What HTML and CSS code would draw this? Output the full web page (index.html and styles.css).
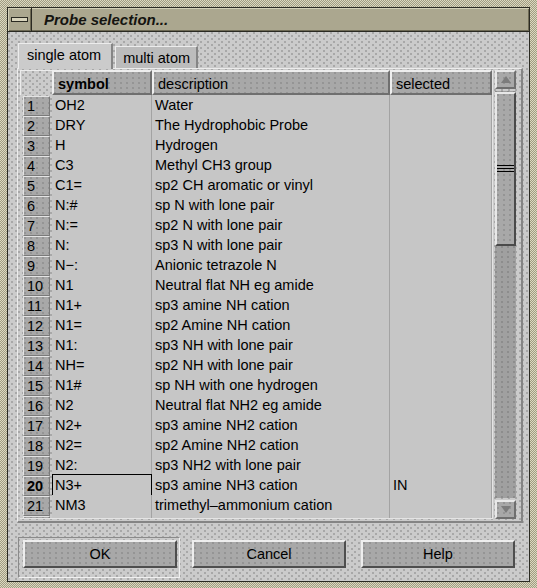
FILE: index.html
```html
<!DOCTYPE html>
<html>
<head>
<meta charset="utf-8">
<link rel="stylesheet" href="styles.css">
</head>
<body>
<div class="frame">
  <div class="win">
    <div class="titlebar">
      <div class="menubtn"><span class="dash"></span></div>
      <div class="title">Probe selection...</div>
    </div>
    <div class="body">
      <div class="tabs">
        <div class="tab active">single atom</div>
        <div class="tab">multi atom</div>
      </div>
      <div class="panel">
        <div class="tablewrap">
          <div class="grid">
            <div class="corner"></div>
            <div class="hcell bold">symbol</div>
            <div class="hcell">description</div>
            <div class="hcell">selected</div>
          </div>
          <div class="rows">
            <div class="grid row"><div class="rn">1</div><div class="c">OH2</div><div class="c">Water</div><div class="c"></div></div>
            <div class="grid row"><div class="rn">2</div><div class="c">DRY</div><div class="c">The Hydrophobic Probe</div><div class="c"></div></div>
            <div class="grid row"><div class="rn">3</div><div class="c">H</div><div class="c">Hydrogen</div><div class="c"></div></div>
            <div class="grid row"><div class="rn">4</div><div class="c">C3</div><div class="c">Methyl CH3 group</div><div class="c"></div></div>
            <div class="grid row"><div class="rn">5</div><div class="c">C1=</div><div class="c">sp2 CH aromatic or vinyl</div><div class="c"></div></div>
            <div class="grid row"><div class="rn">6</div><div class="c">N:#</div><div class="c">sp N with lone pair</div><div class="c"></div></div>
            <div class="grid row"><div class="rn">7</div><div class="c">N:=</div><div class="c">sp2 N with lone pair</div><div class="c"></div></div>
            <div class="grid row"><div class="rn">8</div><div class="c">N:</div><div class="c">sp3 N with lone pair</div><div class="c"></div></div>
            <div class="grid row"><div class="rn">9</div><div class="c">N−:</div><div class="c">Anionic tetrazole N</div><div class="c"></div></div>
            <div class="grid row"><div class="rn">10</div><div class="c">N1</div><div class="c">Neutral flat NH eg amide</div><div class="c"></div></div>
            <div class="grid row"><div class="rn">11</div><div class="c">N1+</div><div class="c">sp3 amine NH cation</div><div class="c"></div></div>
            <div class="grid row"><div class="rn">12</div><div class="c">N1=</div><div class="c">sp2 Amine NH cation</div><div class="c"></div></div>
            <div class="grid row"><div class="rn">13</div><div class="c">N1:</div><div class="c">sp3 NH with lone pair</div><div class="c"></div></div>
            <div class="grid row"><div class="rn">14</div><div class="c">NH=</div><div class="c">sp2 NH with lone pair</div><div class="c"></div></div>
            <div class="grid row"><div class="rn">15</div><div class="c">N1#</div><div class="c">sp NH with one hydrogen</div><div class="c"></div></div>
            <div class="grid row"><div class="rn">16</div><div class="c">N2</div><div class="c">Neutral flat NH2 eg amide</div><div class="c"></div></div>
            <div class="grid row"><div class="rn">17</div><div class="c">N2+</div><div class="c">sp3 amine NH2 cation</div><div class="c"></div></div>
            <div class="grid row"><div class="rn">18</div><div class="c">N2=</div><div class="c">sp2 Amine NH2 cation</div><div class="c"></div></div>
            <div class="grid row"><div class="rn">19</div><div class="c">N2:</div><div class="c">sp3 NH2 with lone pair</div><div class="c"></div></div>
            <div class="grid row"><div class="rn bold">20</div><div class="c focus">N3+</div><div class="c">sp3 amine NH3 cation</div><div class="c">IN</div></div>
            <div class="grid row"><div class="rn">21</div><div class="c">NM3</div><div class="c">trimethyl–ammonium cation</div><div class="c"></div></div>
            <div class="grid row"><div class="rn"></div><div class="c"></div><div class="c"></div><div class="c"></div></div>
          </div>
        </div>
        <div class="scrollbar">
          <div class="arrow up"><span class="tri-up"></span></div>
          <div class="trough">
            <div class="thumb"><span class="grip"></span></div>
          </div>
          <div class="arrow down"><span class="tri-down"></span></div>
        </div>
      </div>
      <div class="buttons">
        <div class="default"><div class="btn">OK</div></div>
        <div class="btn cancel">Cancel</div>
        <div class="btn help">Help</div>
      </div>
    </div>
  </div>
</div>
</body>
</html>
```
FILE: styles.css
```css
html, body {
  margin: 0;
  padding: 0;
}
body {
  width: 537px;
  height: 588px;
  overflow: hidden;
  font-family: "Liberation Sans", Arial, sans-serif;
  font-size: 14.5px;
  color: #000;
}
.frame {
  width: 537px;
  height: 588px;
  box-sizing: border-box;
  padding: 7px 7px 6px 7px;
  background-color: #c8c4aa;
  background-image:
    repeating-conic-gradient(#a09c82 0 25%, #dcd8c0 0 50%);
  background-size: 2px 2px;
}
.win {
  width: 523px;
  height: 575px;
  box-sizing: border-box;
  border: 1px solid #2a2a22;
  display: flex;
  flex-direction: column;
  background-color: #cbcbcb;
}
.titlebar {
  height: 23px;
  flex: none;
  display: flex;
  background: #aba78f;
  border-bottom: 1px solid #2a2a22;
  box-shadow: inset 1px 1px 0 #d4d0b8, inset -1px -1px 0 #6e6a55;
}
.menubtn {
  width: 23px;
  flex: none;
  border-right: 1px solid #2a2a22;
  display: flex;
  align-items: center;
  justify-content: center;
  box-shadow: inset 1px 1px 0 #d4d0b8, inset -1px -1px 0 #6e6a55;
}
.dash {
  width: 15px;
  height: 3px;
  border: 1px solid #2a2a22;
  background: #d8d4bc;
}
.title {
  font-style: italic;
  font-weight: bold;
  font-size: 15px;
  line-height: 23px;
  padding-left: 12px;
  color: #141410;
}
.body {
  flex: 1;
  display: flex;
  flex-direction: column;
  padding: 11px 6px 0 9px;
  background-color: #cbcbcb;
  background-image:
    radial-gradient(circle at 1px 1px, #a6a6a6 0.7px, transparent 0.8px),
    radial-gradient(circle at 1px 1px, #a6a6a6 0.7px, transparent 0.8px);
  background-size: 7px 6px, 7px 6px;
  background-position: 0 0, 3px 3px;
}
.tabs {
  display: flex;
  align-items: flex-end;
  height: 25px;
  padding-left: 1px;
  gap: 2px;
}
.tab {
  height: 22px;
  padding: 0 6px 0 7px;
  line-height: 22px;
  border-top: 1px solid #ececec;
  border-left: 1px solid #ececec;
  border-right: 2px solid #858585;
  background: #bcbcbc;
  box-sizing: border-box;
}
.tab.active {
  height: 26px;
  line-height: 23px;
  padding: 0 10px 0 8px;
  background: #cbcbcb;
  margin-bottom: -1px;
  position: relative;
  z-index: 1;
  border-right: 2px solid #858585;
}
.panel {
  width: 506px;
  height: 455px;
  box-sizing: border-box;
  border-top: 1px solid #ececec;
  border-left: 1px solid #ececec;
  border-right: 2px solid #858585;
  border-bottom: 2px solid #858585;
  display: flex;
  padding: 1px 5px 2px 2px;
  gap: 2px;
}
.tablewrap {
  width: 474px;
  display: flex;
  flex-direction: column;
  border-right: 1px solid #e4e4e4;
  border-bottom: 1px solid #e4e4e4;
  overflow: hidden;
}
.grid {
  display: grid;
  grid-template-columns: 32px 100px 238px 102px;
}
.corner {
  height: 25px;
  border-top: 1px solid #ececec;
  border-left: 1px solid #ececec;
  box-sizing: border-box;
}
.hcell {
  height: 25px;
  box-sizing: border-box;
  padding: 2px 0 0 4px;
  line-height: 20px;
  background-color: #a8a8a8;
  background-image: radial-gradient(circle at 1px 1px, #939393 0.7px, transparent 0.8px);
  background-size: 6px 5px;
  border-top: 2px solid #eeeeee;
  border-left: 2px solid #eeeeee;
  border-right: 2px solid #6f6f6f;
  border-bottom: 2px solid #6f6f6f;
}
.bold {
  font-weight: bold;
}
.rows {
  height: 423px;
  overflow: hidden;
}
.row {
  height: 20px;
}
.rn {
  margin: 1px 0 1px 3px;
  box-sizing: border-box;
  padding-left: 3px;
  padding-top: 1px;
  line-height: 17px;
  background-color: #a8a8a8;
  background-image: radial-gradient(circle at 1px 1px, #939393 0.7px, transparent 0.8px);
  background-size: 6px 5px;
  border-top: 1px solid #e4e4e4;
  border-left: 1px solid #e4e4e4;
  border-right: 1px solid #7a7a7a;
  border-bottom: 1px solid #7a7a7a;
  margin-right: 2px;
}
.c {
  background: #c6c6c6;
  border-right: 1px solid #a3a3a3;
  border-bottom: 1px solid #a3a3a3;
  box-sizing: border-box;
  padding-left: 3px;
  padding-top: 2px;
  line-height: 17px;
  white-space: nowrap;
  overflow: hidden;
}
.c.focus {
  border: 1px solid #000;
  padding-left: 2px;
  padding-top: 2px;
  line-height: 16px;
  margin-top: -1px;
}
.scrollbar {
  width: 21px;
  display: flex;
  flex-direction: column;
  gap: 2px;
}
.arrow {
  height: 19px;
  flex: none;
  box-sizing: border-box;
  background-color: #a8a8a8;
  background-image: radial-gradient(circle at 1px 1px, #939393 0.7px, transparent 0.8px);
  background-size: 6px 5px;
  border-top: 2px solid #e8e8e8;
  border-left: 2px solid #e8e8e8;
  border-right: 2px solid #6f6f6f;
  border-bottom: 2px solid #6f6f6f;
  display: flex;
  align-items: center;
  justify-content: center;
}
.tri-up {
  width: 0;
  height: 0;
  border-left: 5px solid transparent;
  border-right: 5px solid transparent;
  border-bottom: 7px solid #7c7c7c;
}
.tri-down {
  width: 0;
  height: 0;
  border-left: 5px solid transparent;
  border-right: 5px solid transparent;
  border-top: 7px solid #7c7c7c;
}
.trough {
  flex: 1;
  background: #a0a0a0;
  background-image: radial-gradient(circle at 1px 1px, #8c8c8c 0.7px, transparent 0.8px);
  background-size: 6px 5px;
  padding-top: 1px;
}
.thumb {
  height: 154px;
  box-sizing: border-box;
  background-color: #a8a8a8;
  background-image: radial-gradient(circle at 1px 1px, #939393 0.7px, transparent 0.8px);
  background-size: 6px 5px;
  border-top: 2px solid #e8e8e8;
  border-left: 2px solid #e8e8e8;
  border-right: 2px solid #4a4a4a;
  border-bottom: 2px solid #4a4a4a;
  display: flex;
  align-items: center;
}
.grip {
  width: 100%;
  height: 7px;
  border-top: 1px solid #000;
  border-bottom: 1px solid #000;
  background: linear-gradient(#000, #000) center / 100% 1px no-repeat;
  box-sizing: border-box;
  margin-top: -2px;
}
.buttons {
  display: flex;
  align-items: flex-start;
  padding: 14px 0 0 1px;
}
.default {
  width: 162px;
  height: 41px;
  flex: none;
  box-sizing: border-box;
  border-top: 1px solid #8a8a8a;
  border-left: 1px solid #8a8a8a;
  border-right: 1px solid #f0f0f0;
  border-bottom: 1px solid #f0f0f0;
  padding: 2px 0 0 4px;
  margin-right: 12px;
}
.btn {
  width: 154px;
  height: 28px;
  flex: none;
  box-sizing: border-box;
  text-align: center;
  line-height: 24px;
  background-color: #a8a8a8;
  background-image: radial-gradient(circle at 1px 1px, #939393 0.7px, transparent 0.8px);
  background-size: 6px 5px;
  border-top: 2px solid #eeeeee;
  border-left: 2px solid #eeeeee;
  border-right: 2px solid #4e4e4e;
  border-bottom: 2px solid #4e4e4e;
}
.cancel {
  margin-top: 3px;
  margin-right: 15px;
}
.help {
  margin-top: 3px;
}
```
